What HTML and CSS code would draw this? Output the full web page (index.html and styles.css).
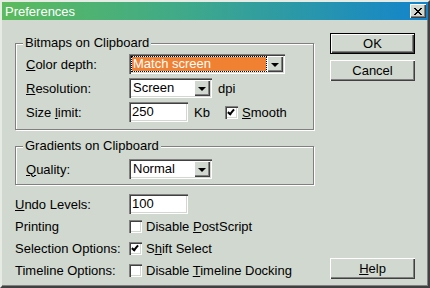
FILE: index.html
```html
<!DOCTYPE html>
<html lang="en">
<head>
    <meta charset="UTF-8">
    <title>Preferences</title>
    <link rel="stylesheet" href="styles.css">
</head>
<body>
    <div class="window">
        <div class="titlebar">
            <span class="title">Preferences</span>
            <div class="close">
                <svg width="8" height="7" viewBox="0 0 8 7"><path d="M0 0L7 7M1 0L8 7M7 0L0 7M8 0L1 7" stroke="#000" stroke-width="1"/></svg>
            </div>
        </div>
        <div class="content">
            <div class="left">
                <fieldset class="group group-bitmaps">
                    <legend>Bitmaps on Clipboard</legend>
                    <div class="row">
                        <span class="label"><u>C</u>olor depth:</span>
                        <div class="combo combo-wide">
                            <span class="value selected">Match screen</span>
                            <span class="arrow"></span>
                        </div>
                    </div>
                    <div class="row">
                        <span class="label"><u>R</u>esolution:</span>
                        <div class="combo">
                            <span class="value">Screen</span>
                            <span class="arrow"></span>
                        </div>
                        <span class="unit">dpi</span>
                    </div>
                    <div class="row">
                        <span class="label">Size <u>l</u>imit:</span>
                        <div class="field">250</div>
                        <span class="unit">Kb</span>
                        <span class="check checked"></span>
                        <span class="check-label"><u>S</u>mooth</span>
                    </div>
                </fieldset>
                <fieldset class="group group-gradients">
                    <legend>Gradients on Clipboard</legend>
                    <div class="row">
                        <span class="label"><u>Q</u>uality:</span>
                        <div class="combo">
                            <span class="value">Normal</span>
                            <span class="arrow"></span>
                        </div>
                    </div>
                </fieldset>
                <div class="options">
                    <div class="row">
                        <span class="label label-wide"><u>U</u>ndo Levels:</span>
                        <div class="field">100</div>
                    </div>
                    <div class="row">
                        <span class="label label-wide">Printing</span>
                        <span class="check"></span>
                        <span class="check-label">Disable <u>P</u>ostScript</span>
                    </div>
                    <div class="row">
                        <span class="label label-wide">Selection Options:</span>
                        <span class="check checked"></span>
                        <span class="check-label">S<u>h</u>ift Select</span>
                    </div>
                    <div class="row">
                        <span class="label label-wide">Timeline Options:</span>
                        <span class="check"></span>
                        <span class="check-label">Disable <u>T</u>imeline Docking</span>
                    </div>
                </div>
            </div>
            <div class="right">
                <div class="btn-stack">
                    <div class="btn btn-default">OK</div>
                    <div class="btn">Cancel</div>
                </div>
                <div class="btn"><u>H</u>elp</div>
            </div>
        </div>
    </div>
</body>
</html>
```

FILE: styles.css
```css
body {
    margin: 0;
    background: #d1d8cf;
    font-family: "Liberation Sans", Arial, sans-serif;
    font-size: 13px;
    color: #000;
}
.window {
    width: 430px;
    height: 288px;
    box-sizing: border-box;
    display: flex;
    flex-direction: column;
    background: #d1d8cf;
    border-top: 2px solid #e6ebe4;
    border-left: 2px solid #e6ebe4;
    border-right: 2px solid #404040;
    border-bottom: 2px solid #404040;
    box-shadow: inset -1px -1px 0 #808080;
}
.titlebar {
    height: 18px;
    display: flex;
    align-items: center;
    justify-content: space-between;
    background: linear-gradient(to right, #5cbb5c, #3ea88c 45%, #1384cc);
}
.title {
    color: #fff;
    font-size: 13px;
    padding-left: 3px;
}
.close {
    width: 16px;
    height: 14px;
    box-sizing: border-box;
    margin-right: 2px;
    display: flex;
    align-items: center;
    justify-content: center;
    background: #d1d8cf;
    box-shadow: inset 1px 1px 0 #fff, inset -1px -1px 0 #404040, inset -2px -2px 0 #808080;
}
.content {
    flex: 1;
    display: flex;
}
.left {
    width: 316px;
    padding: 16px 0 0 13px;
    box-sizing: border-box;
}
.group {
    width: 299px;
    box-sizing: border-box;
    margin: 0;
    padding: 4px 0 7px 10px;
    border: 1px solid #808080;
    box-shadow: inset 1px 1px 0 #fff, 1px 1px 0 #fff;
    display: flex;
    flex-direction: column;
    gap: 4px;
}
.group legend {
    padding: 0 2px;
    margin-left: -3px;
    line-height: 14px;
    background: #d1d8cf;
}
.group-gradients {
    margin-top: 9px;
    padding-top: 6px;
    padding-bottom: 5px;
}
.row {
    display: flex;
    align-items: center;
    height: 20px;
}
.label {
    width: 103px;
    flex-shrink: 0;
}
.label-wide {
    width: 114px;
}
.combo {
    width: 83px;
    height: 20px;
    box-sizing: border-box;
    display: flex;
    align-items: stretch;
    padding: 2px;
    background: #fff;
    box-shadow: inset 1px 1px 0 #808080, inset 2px 2px 0 #404040, inset -1px -1px 0 #fff, inset -2px -2px 0 #d1d8cf;
}
.combo-wide {
    width: 156px;
}
.combo .value {
    flex: 1;
    padding-left: 2px;
    line-height: 16px;
    white-space: nowrap;
    overflow: hidden;
}
.combo .selected {
    margin: 1px;
    padding-left: 1px;
    line-height: 14px;
    background: #f08032;
    color: #fff;
    outline: 1px dotted #000;
}
.arrow {
    width: 16px;
    flex-shrink: 0;
    background: #d1d8cf;
    box-shadow: inset 1px 1px 0 #fff, inset -1px -1px 0 #404040, inset -2px -2px 0 #808080;
    display: flex;
    align-items: center;
    justify-content: center;
}
.arrow::after {
    content: "";
    border-left: 4px solid transparent;
    border-right: 4px solid transparent;
    border-top: 4px solid #000;
    margin-top: 1px;
}
.unit {
    margin-left: 6px;
}
.field {
    width: 59px;
    height: 20px;
    box-sizing: border-box;
    padding: 2px 3px;
    line-height: 16px;
    background: #fff;
    box-shadow: inset 1px 1px 0 #808080, inset 2px 2px 0 #404040, inset -1px -1px 0 #fff, inset -2px -2px 0 #d1d8cf;
}
.field + .unit {
    width: 31px;
}
.check {
    width: 13px;
    height: 13px;
    box-sizing: border-box;
    flex-shrink: 0;
    background: #fff;
    box-shadow: inset 1px 1px 0 #808080, inset 2px 2px 0 #404040, inset -1px -1px 0 #fff, inset -2px -2px 0 #d1d8cf;
    position: relative;
}
.checked::after {
    content: "";
    position: absolute;
    left: 4px;
    top: 2px;
    width: 2px;
    height: 5px;
    border-right: 2px solid #000;
    border-bottom: 2px solid #000;
    transform: rotate(40deg);
}
.check-label {
    margin-left: 4px;
    white-space: nowrap;
}
.options {
    margin-top: 9px;
    display: flex;
    flex-direction: column;
    gap: 2px;
}
.right {
    flex: 1;
    display: flex;
    flex-direction: column;
    align-items: flex-end;
    justify-content: space-between;
    padding: 13px 13px 7px 0;
}
.btn-stack {
    display: flex;
    flex-direction: column;
    gap: 6px;
}
.btn {
    width: 85px;
    height: 21px;
    box-sizing: border-box;
    display: flex;
    align-items: center;
    justify-content: center;
    background: #d1d8cf;
    box-shadow: inset 1px 1px 0 #fff, inset -1px -1px 0 #404040, inset -2px -2px 0 #808080;
}
.btn-default {
    border: 1px solid #000;
}
```
